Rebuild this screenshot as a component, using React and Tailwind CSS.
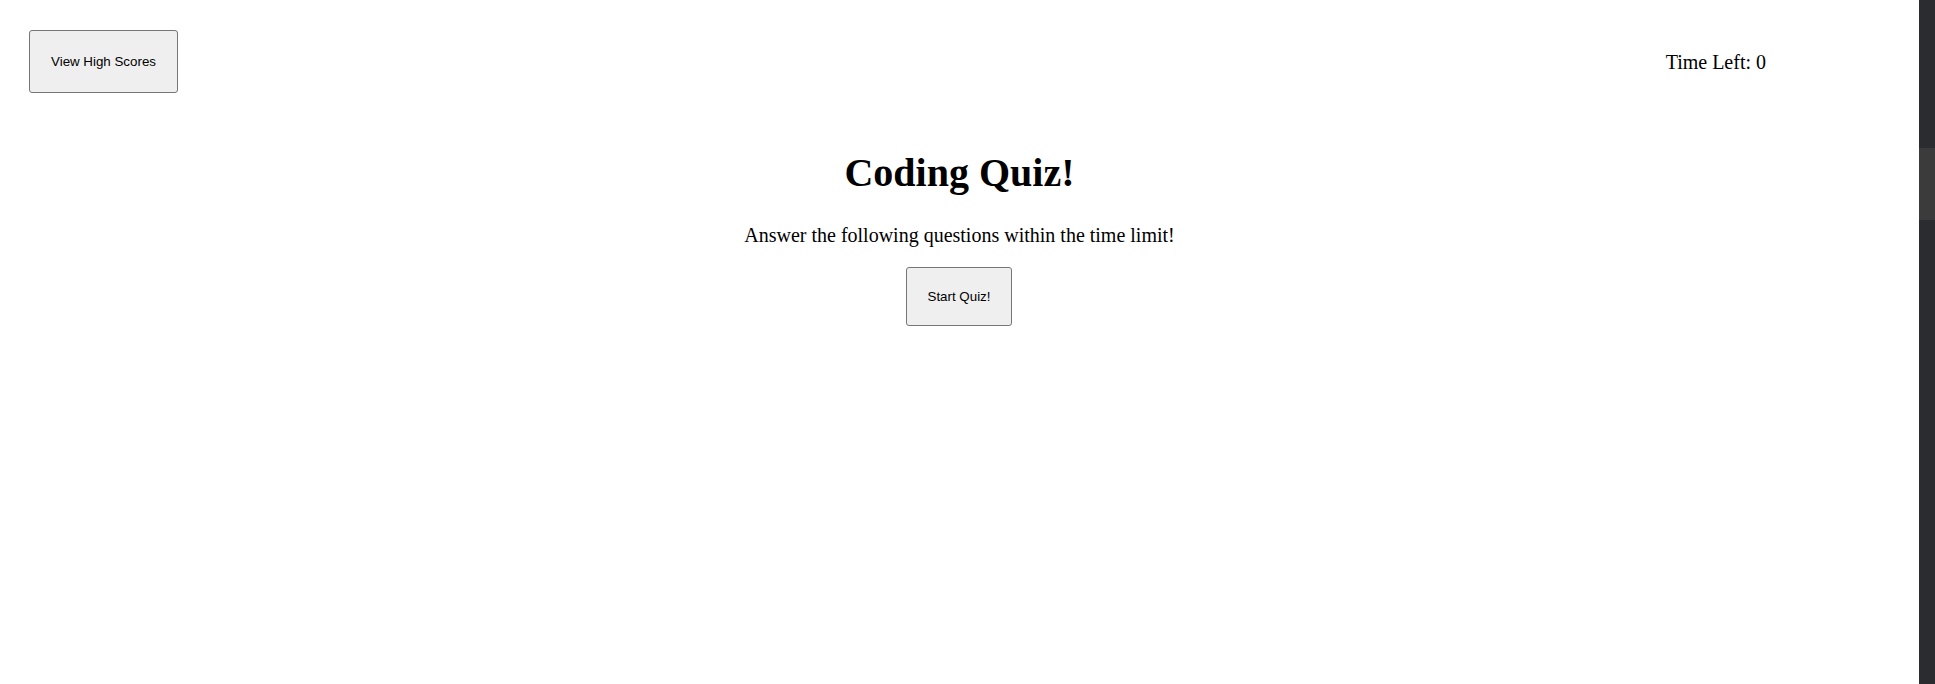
export default function App() {
  const serif = { fontFamily: '"Liberation Serif", "Times New Roman", serif' };
  return (
    <div className="flex w-full h-[684px] overflow-hidden bg-white">
      <main className="flex-1 flex flex-col pt-[30px] text-black" style={serif}>
        <header className="flex items-center justify-between pl-[29px] pr-[153px]">
          <button className="w-[149px] h-[63px] bg-[#efefef] border border-[#767676] rounded-[3px] text-[13.33px] text-black font-['Liberation_Sans',Arial,sans-serif]">
            View High Scores
          </button>
          <div className="text-[20px] leading-[22px]">Time Left: 0</div>
        </header>
        <section className="flex flex-col items-center mt-[58px]">
          <h1 className="text-[40px] leading-[44px] font-bold">Coding Quiz!</h1>
          <p className="mt-[29px] text-[20px] leading-[22px]">Answer the following questions within the time limit!</p>
          <button className="mt-[21px] mr-[1px] w-[106px] h-[59px] bg-[#efefef] border border-[#767676] rounded-[3px] text-[13.33px] text-black font-['Liberation_Sans',Arial,sans-serif]">
            Start Quiz!
          </button>
        </section>
      </main>
      <aside className="w-[16px] h-full bg-[#2b2c30] flex flex-col">
        <div className="h-[148px]" />
        <div className="h-[72px] bg-[#3b3b3c]" />
      </aside>
    </div>
  );
}
